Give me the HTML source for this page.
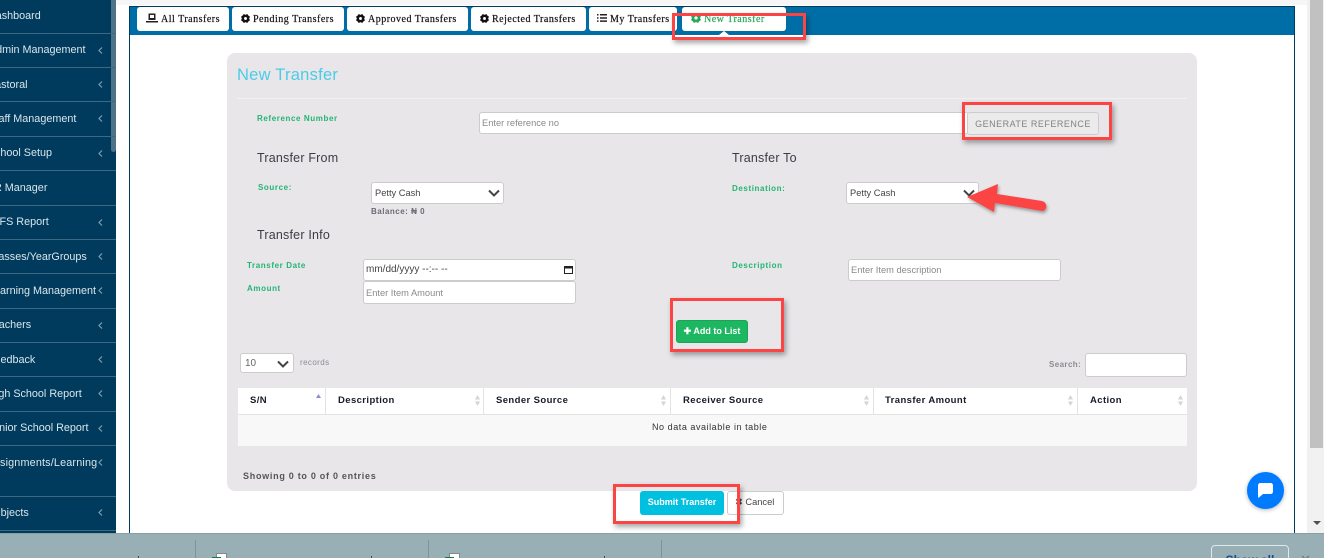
<!DOCTYPE html>
<html><head><meta charset="utf-8">
<style>
*{box-sizing:border-box}
html,body{margin:0;padding:0;width:1324px;height:558px;overflow:hidden;background:#fff;font-family:"Liberation Sans",sans-serif}
#w{position:relative;width:1324px;height:558px;overflow:hidden}
.a{position:absolute;white-space:nowrap}
.si{position:absolute;width:120px;color:#d9e6ec;font-size:10.8px;line-height:13px;white-space:nowrap}
.sep{position:absolute;left:0;width:116px;height:1px;background:#3c6a85}
.ch{position:absolute;left:97px;width:7px;height:7px}
.tab{position:absolute;top:7px;height:24px;background:#fff;border-radius:3px;font-family:"Liberation Serif",serif;font-size:10px;font-weight:400;letter-spacing:.5px;color:#111;line-height:25px;white-space:nowrap;-webkit-text-stroke:.2px #111}
.lab{position:absolute;font-size:8px;font-weight:700;letter-spacing:.6px;color:#22b573;white-space:nowrap;line-height:10px}
.h{position:absolute;font-size:12.5px;color:#3c3c46;letter-spacing:.2px;line-height:15px;white-space:nowrap}
.inp{position:absolute;background:#fff;border:1px solid #ccc;border-radius:3px;font-size:9.3px;color:#8a8a8a;line-height:20px;padding-left:2px;white-space:nowrap}
.red{position:absolute;border:3px solid #fb4444;box-shadow:2px 3px 5px rgba(0,0,0,.35)}
.th{position:absolute;top:395px;font-size:9.5px;font-weight:700;letter-spacing:.4px;color:#1a1a2a;line-height:11px;white-space:nowrap}
.vl{position:absolute;top:388px;width:1px;height:26px;background:#e3e3e3}
.sort{position:absolute;top:395px;width:5px;height:11px}
</style></head><body><div id="w">

<!-- sidebar -->
<div class="a" style="left:0;top:0;width:116px;height:533px;background:#003a5c"></div>
<div class="si" style="top:10px;left:-4.300px">ashboard</div>
<div class="si" style="top:44px;left:-3.900px">dmin Management</div>
<div class="si" style="top:79px;left:-4.900px">astoral</div>
<div class="si" style="top:113px;left:-1.500px">aff Management</div>
<div class="si" style="top:147px;left:-5px">chool Setup</div>
<div class="si" style="top:182px;left:-6px">R Manager</div>
<div class="si" style="top:216px;left:-3.500px">IFS Report</div>
<div class="si" style="top:251px;left:-1.600px">asses/YearGroups</div>
<div class="si" style="top:285px;left:0">arning Management</div>
<div class="si" style="top:319px;left:-1.300px">achers</div>
<div class="si" style="top:354px;left:.5px">edback</div>
<div class="si" style="top:388px;left:-1.700px">gh School Report</div>
<div class="si" style="top:422px;left:-.9px">nior School Report</div>
<div class="si" style="top:457px;left:0;letter-spacing:.17px">signments/Learning</div>
<div class="si" style="top:507px;left:.6px">bjects</div>
<div class="a" style="left:111px;top:0;width:5px;height:152px;background:#4d7388;border-radius:0 0 3px 3px"></div>

<div class="sep" style="top:33px"></div><div class="sep" style="top:67px"></div><div class="sep" style="top:101px"></div><div class="sep" style="top:136px"></div><div class="sep" style="top:170px"></div><div class="sep" style="top:205px"></div><div class="sep" style="top:239px"></div><div class="sep" style="top:273px"></div><div class="sep" style="top:308px"></div><div class="sep" style="top:342px"></div><div class="sep" style="top:376px"></div><div class="sep" style="top:411px"></div><div class="sep" style="top:445px"></div><div class="sep" style="top:496px"></div><div class="sep" style="top:530px"></div>

<svg class="ch" style="top:47px" viewBox="0 0 7 7"><path d="M5 .5 2 3.500 5 6.500" fill="none" stroke="#7f9fb0" stroke-width="1.200"/></svg>
<svg class="ch" style="top:81px" viewBox="0 0 7 7"><path d="M5 .5 2 3.500 5 6.500" fill="none" stroke="#7f9fb0" stroke-width="1.200"/></svg>
<svg class="ch" style="top:115px" viewBox="0 0 7 7"><path d="M5 .5 2 3.500 5 6.500" fill="none" stroke="#7f9fb0" stroke-width="1.200"/></svg>
<svg class="ch" style="top:150px" viewBox="0 0 7 7"><path d="M5 .5 2 3.500 5 6.500" fill="none" stroke="#7f9fb0" stroke-width="1.200"/></svg>
<svg class="ch" style="top:219px" viewBox="0 0 7 7"><path d="M5 .5 2 3.500 5 6.500" fill="none" stroke="#7f9fb0" stroke-width="1.200"/></svg>
<svg class="ch" style="top:253px" viewBox="0 0 7 7"><path d="M5 .5 2 3.500 5 6.500" fill="none" stroke="#7f9fb0" stroke-width="1.200"/></svg>
<svg class="ch" style="top:287px" viewBox="0 0 7 7"><path d="M5 .5 2 3.500 5 6.500" fill="none" stroke="#7f9fb0" stroke-width="1.200"/></svg>
<svg class="ch" style="top:322px" viewBox="0 0 7 7"><path d="M5 .5 2 3.500 5 6.500" fill="none" stroke="#7f9fb0" stroke-width="1.200"/></svg>
<svg class="ch" style="top:356px" viewBox="0 0 7 7"><path d="M5 .5 2 3.500 5 6.500" fill="none" stroke="#7f9fb0" stroke-width="1.200"/></svg>
<svg class="ch" style="top:390px" viewBox="0 0 7 7"><path d="M5 .5 2 3.500 5 6.500" fill="none" stroke="#7f9fb0" stroke-width="1.200"/></svg>
<svg class="ch" style="top:425px" viewBox="0 0 7 7"><path d="M5 .5 2 3.500 5 6.500" fill="none" stroke="#7f9fb0" stroke-width="1.200"/></svg>
<svg class="ch" style="top:459px" viewBox="0 0 7 7"><path d="M5 .5 2 3.500 5 6.500" fill="none" stroke="#7f9fb0" stroke-width="1.200"/></svg>
<svg class="ch" style="top:509px" viewBox="0 0 7 7"><path d="M5 .5 2 3.500 5 6.500" fill="none" stroke="#7f9fb0" stroke-width="1.200"/></svg>

<!-- top strip & panel frame -->
<div class="a" style="left:116px;top:0;width:1193px;height:5px;background:#f6f6f6"></div>
<div class="a" style="left:129px;top:6px;width:1166px;height:527px;border-left:1px solid #003a5c;border-right:1px solid #003a5c;border-top:1px solid #003a5c;background:#fff"></div>
<div class="a" style="left:130px;top:7px;width:1164px;height:28px;background:#006ea6"></div>

<!-- tabs -->
<div class="tab" style="left:137px;width:92px;padding-left:9px"><svg width="12" height="10" viewBox="0 0 12 10" style="vertical-align:-1px;margin-right:3px"><path d="M2.500 0.500H9.500V7H2.500Z M0 8H12V9.500H0Z" fill="#222"/><rect x="4" y="2" width="4" height="3" fill="#fff"/></svg>All Transfers</div>
<div class="tab" style="left:232px;width:112px;padding-left:9px"><svg width="9" height="9" viewBox="0 0 10 10" style="vertical-align:-1px;margin-right:3px"><path d="M5 1 7 0 8 1.500 10 3 9 5 10 7 8 8.500 7 10 5 9 3 10 2 8.500 0 7 1 5 0 3 2 1.500 3 0Z" fill="#111"/><circle cx="5" cy="5" r="1.600" fill="#fff"/></svg>Pending Transfers</div>
<div class="tab" style="left:347px;width:121px;padding-left:9px"><svg width="9" height="9" viewBox="0 0 10 10" style="vertical-align:-1px;margin-right:3px"><path d="M5 1 7 0 8 1.500 10 3 9 5 10 7 8 8.500 7 10 5 9 3 10 2 8.500 0 7 1 5 0 3 2 1.500 3 0Z" fill="#111"/><circle cx="5" cy="5" r="1.600" fill="#fff"/></svg>Approved Transfers</div>
<div class="tab" style="left:471px;width:115px;padding-left:9px"><svg width="9" height="9" viewBox="0 0 10 10" style="vertical-align:-1px;margin-right:3px"><path d="M5 1 7 0 8 1.500 10 3 9 5 10 7 8 8.500 7 10 5 9 3 10 2 8.500 0 7 1 5 0 3 2 1.500 3 0Z" fill="#111"/><circle cx="5" cy="5" r="1.600" fill="#fff"/></svg>Rejected Transfers</div>
<div class="tab" style="left:589px;width:88px;padding-left:8px"><svg width="10" height="8" viewBox="0 0 10 8" style="vertical-align:0;margin-right:3px"><path d="M0 0H1.500V1.500H0ZM3 0H10V1.500H3ZM0 3.200H1.500V4.700H0ZM3 3.200H10V4.700H3ZM0 6.400H1.500V7.900H0ZM3 6.400H10V7.900H3Z" fill="#222"/></svg>My Transfers</div>
<div class="tab" style="left:682px;width:104px;padding-left:9px;color:#2aa65a;-webkit-text-stroke:.2px #2aa65a"><svg width="10" height="10" viewBox="0 0 10 10" style="vertical-align:-1px;margin-right:3px"><path d="M5 1 7 0 8 1.500 10 3 9 5 10 7 8 8.500 7 10 5 9 3 10 2 8.500 0 7 1 5 0 3 2 1.500 3 0Z" fill="#2aa65a"/><circle cx="5" cy="5" r="1.600" fill="#fff"/></svg>New Transfer</div>
<div class="a" style="left:719px;top:31px;width:0;height:0;border-left:5px solid transparent;border-right:5px solid transparent;border-bottom:4px solid #fff"></div>

<!-- grey card -->
<div class="a" style="left:227px;top:53px;width:970px;height:438px;background:#e8e6e9;border-radius:8px"></div>
<div class="a" style="left:237px;top:66px;font-size:16.500px;color:#4ccbe8;line-height:19px;letter-spacing:.25px">New Transfer</div>
<div class="a" style="left:237px;top:98px;width:950px;height:1px;background:#f1f0f2"></div>

<div class="lab" style="left:257px;top:114px">Reference Number</div>
<div class="inp" style="left:479px;top:112px;width:490px;height:22px">Enter reference no</div>
<div class="a" style="left:967px;top:112px;width:132px;height:23px;background:#ebebeb;border:1px solid #ccc;border-radius:3px;font-size:9px;color:#828282;letter-spacing:.5px;line-height:22px;text-align:center">GENERATE REFERENCE</div>

<div class="h" style="left:257px;top:151px">Transfer From</div>
<div class="h" style="left:732px;top:151px">Transfer To</div>
<div class="lab" style="left:258px;top:183px">Source:</div>
<div class="inp" style="left:371px;top:182px;width:133px;height:22px;color:#444;padding-left:3px;line-height:20px">Petty Cash<svg style="position:absolute;left:116px;top:6px" width="12" height="8" viewBox="0 0 12 8"><path d="M1 1.500 6 6.500 11 1.500" fill="none" stroke="#444" stroke-width="2"/></svg></div>
<div class="a" style="left:371px;top:207px;font-size:8px;font-weight:700;color:#6a6a72;letter-spacing:.5px;line-height:10px">Balance: ₦ 0</div>
<div class="lab" style="left:732px;top:184px">Destination:</div>
<div class="inp" style="left:846px;top:182px;width:133px;height:22px;color:#444;padding-left:3px;line-height:20px">Petty Cash<svg style="position:absolute;left:116px;top:6px" width="12" height="8" viewBox="0 0 12 8"><path d="M1 1.500 6 6.500 11 1.500" fill="none" stroke="#444" stroke-width="2"/></svg></div>

<div class="h" style="left:257px;top:228px">Transfer Info</div>
<div class="lab" style="left:247px;top:261px">Transfer Date</div>
<div class="inp" style="left:363px;top:259px;width:213px;height:22px;color:#444;padding-left:2px;line-height:20px;font-size:10px">mm/dd/yyyy --:-- --<svg style="position:absolute;left:200px;top:5px" width="9" height="9" viewBox="0 0 9 9"><path d="M.5 1.500H8.500V8.500H.5Z" fill="none" stroke="#222" stroke-width="1"/><rect x=".5" y="1.500" width="8" height="2" fill="#222"/></svg></div>
<div class="lab" style="left:247px;top:284px">Amount</div>
<div class="inp" style="left:363px;top:281px;width:213px;height:23px;line-height:22px">Enter Item Amount</div>
<div class="lab" style="left:732px;top:261px">Description</div>
<div class="inp" style="left:848px;top:259px;width:213px;height:22px">Enter Item description</div>

<div class="a" style="left:676px;top:320px;width:72px;height:23px;background:#1cb760;border:1px solid #18a656;border-radius:3px;color:#fff;font-size:9px;font-weight:700;line-height:21px;text-align:center">✚ Add to List</div>

<div class="inp" style="left:240px;top:353px;width:54px;height:20px;color:#666;padding-left:4px;line-height:19px;font-size:10px">10<svg style="position:absolute;left:36px;top:6px" width="12" height="8" viewBox="0 0 12 8"><path d="M1 1.500 6 6.500 11 1.500" fill="none" stroke="#444" stroke-width="2"/></svg></div>
<div class="a" style="left:300px;top:358px;font-size:8px;color:#8b8b90;letter-spacing:.4px;line-height:10px">records</div>
<div class="a" style="left:1049px;top:360px;font-size:8px;color:#8b8b90;font-weight:700;letter-spacing:.4px;line-height:10px">Search:</div>
<div class="inp" style="left:1085px;top:353px;width:102px;height:24px"></div>

<!-- table -->
<div class="a" style="left:238px;top:388px;width:949px;height:26px;background:#fff"></div>
<div class="a" style="left:238px;top:414px;width:949px;height:32px;background:#f8f8f8;border-top:1px solid #e3e3e3"></div>
<div class="vl" style="left:325px"></div><div class="vl" style="left:483px"></div><div class="vl" style="left:670px"></div><div class="vl" style="left:873px"></div><div class="vl" style="left:1077px"></div>
<div class="th" style="left:250px">S/N</div>
<div class="th" style="left:338px">Description</div>
<div class="th" style="left:496px">Sender Source</div>
<div class="th" style="left:683px">Receiver Source</div>
<div class="th" style="left:885px">Transfer Amount</div>
<div class="th" style="left:1090px">Action</div>
<svg class="sort" style="left:316px;top:394px" viewBox="0 0 5 11"><path d="M2.500 0 5 4H0Z" fill="#8a8ae0"/></svg>
<svg class="sort" style="left:475px" viewBox="0 0 5 11"><path d="M2.500 0 5 4.500H0ZM0 6.500H5L2.500 11Z" fill="#d5d5d5"/></svg>
<svg class="sort" style="left:661px" viewBox="0 0 5 11"><path d="M2.500 0 5 4.500H0ZM0 6.500H5L2.500 11Z" fill="#d5d5d5"/></svg>
<svg class="sort" style="left:864px" viewBox="0 0 5 11"><path d="M2.500 0 5 4.500H0ZM0 6.500H5L2.500 11Z" fill="#d5d5d5"/></svg>
<svg class="sort" style="left:1068px" viewBox="0 0 5 11"><path d="M2.500 0 5 4.500H0ZM0 6.500H5L2.500 11Z" fill="#d5d5d5"/></svg>
<svg class="sort" style="left:1178px" viewBox="0 0 5 11"><path d="M2.500 0 5 4.500H0ZM0 6.500H5L2.500 11Z" fill="#d5d5d5"/></svg>
<div class="a" style="left:652px;top:422px;font-size:9px;color:#333;letter-spacing:.55px;line-height:10px">No data available in table</div>
<div class="a" style="left:243px;top:471px;font-size:9px;color:#555;font-weight:700;letter-spacing:.72px;line-height:10px">Showing 0 to 0 of 0 entries</div>

<!-- bottom buttons -->
<div class="a" style="left:640px;top:491px;width:84px;height:24px;background:#00c0e0;border-radius:3px;color:#fff;font-size:9px;font-weight:700;line-height:22px;text-align:center">Submit Transfer</div>
<div class="a" style="left:727px;top:491px;width:57px;height:24px;background:#fff;border:1px solid #ccc;border-radius:3px;color:#444;font-size:9.300px;line-height:21px;padding-left:7px">✖ Cancel</div>

<!-- red annotation boxes -->
<div class="red" style="left:672px;top:13px;width:134px;height:27px"></div>
<div class="red" style="left:962px;top:102px;width:150px;height:38px"></div>
<div class="red" style="left:670px;top:298px;width:114px;height:54px"></div>
<div class="red" style="left:613px;top:484px;width:127px;height:40px"></div>

<!-- arrow -->
<svg class="a" style="left:965px;top:178px" width="90" height="45" viewBox="0 0 90 45"><defs><filter id="s" x="-20%" y="-20%" width="140%" height="150%"><feDropShadow dx="1" dy="2" stdDeviation="1.500" flood-color="#000" flood-opacity=".35"/></filter></defs><path d="M2 19 33 6 32 16 77 23C81 24 82 28 81 30C80 32 79 33 77 33L30 25 29 34Z" fill="#fb4444" filter="url(#s)"/></svg>

<!-- chat bubble -->
<div class="a" style="left:1247px;top:472px;width:37px;height:37px;border-radius:50%;background:#007bff;box-shadow:0 1px 4px rgba(0,0,0,.3)"></div>
<svg class="a" style="left:1257px;top:482px" width="17" height="17" viewBox="0 0 17 17"><path d="M3.500 1H13.500C15 1 16 2 16 3.500V9.500C16 11 15 12 13.500 12H6L2 15.500C1.500 15.800 1 15.500 1 15V3.500C1 2 2 1 3.500 1Z" fill="#fff"/></svg>

<!-- scrollbar -->
<div class="a" style="left:1307px;top:0;width:17px;height:533px;background:#f1f1f1"></div>
<div class="a" style="left:1310px;top:0;width:13px;height:448px;background:#c1c1c1"></div>
<div class="a" style="left:1313px;top:521px;width:0;height:0;border-left:4px solid transparent;border-right:4px solid transparent;border-top:4px solid #505050"></div>

<!-- bottom bar -->
<div class="a" style="left:0;top:533px;width:1324px;height:25px;background:#97afb5;border-top:1px solid #86a0a6"></div>
<div class="a" style="left:195px;top:540px;width:1px;height:18px;background:#7f9399"></div>
<div class="a" style="left:428px;top:540px;width:1px;height:18px;background:#7f9399"></div>
<div class="a" style="left:661px;top:540px;width:1px;height:18px;background:#7f9399"></div>
<div class="a" style="left:138px;top:556px;width:1px;height:2px;background:#445"></div>
<div class="a" style="left:371px;top:556px;width:1px;height:2px;background:#445"></div>
<div class="a" style="left:604px;top:556px;width:1px;height:2px;background:#445"></div>
<div class="a" style="left:216px;top:553px;width:11px;height:6px;background:#fff;border:1px solid #888;border-bottom:0"></div>
<div class="a" style="left:212px;top:557px;width:9px;height:1px;background:#107c41"></div>
<div class="a" style="left:449px;top:553px;width:11px;height:6px;background:#fff;border:1px solid #888;border-bottom:0"></div>
<div class="a" style="left:445px;top:557px;width:9px;height:1px;background:#107c41"></div>
<div class="a" style="left:1211px;top:545px;width:78px;height:30px;border:1px solid #dfe7e9;border-radius:4px;color:#1a4a8a;font-size:12px;font-weight:700;text-align:center;line-height:28px;padding-top:0">Show all</div>
<div class="a" style="left:1300px;top:553px;font-size:13px;color:#6a7a80;line-height:14px">✕</div>
</div></body></html>
